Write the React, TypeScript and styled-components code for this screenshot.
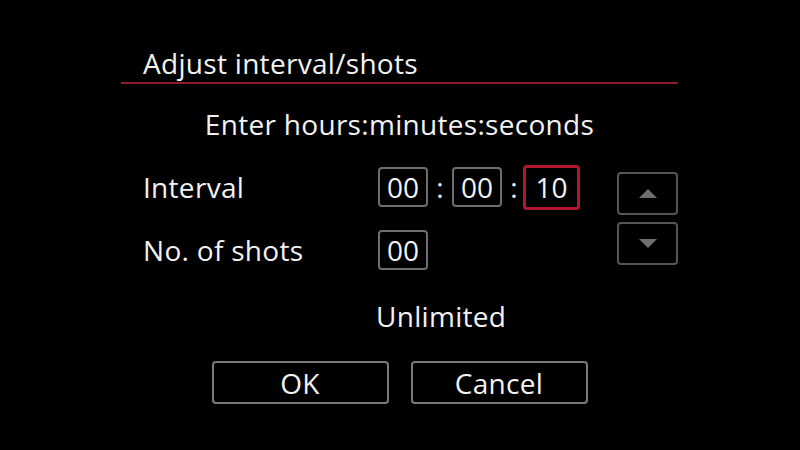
import styled, { createGlobalStyle } from 'styled-components'

const GlobalStyle = createGlobalStyle`
  html, body {
    margin: 0;
    padding: 0;
    background: #000;
  }
  body {
    font-family: 'Open Sans', 'DejaVu Sans', sans-serif;
    color: #f2f2f2;
  }
`

const Screen = styled.div`
  width: 800px;
  height: 450px;
  background: #000;
  overflow: hidden;
  padding-top: 44px;
  box-sizing: border-box;
`

const Dialog = styled.div`
  margin-left: 121px;
  width: 557px;
  display: flex;
  flex-direction: column;
`

const Header = styled.div`
  padding-left: 22px;
  height: 38px;
  border-bottom: 2px solid #8d1c2b;
  display: flex;
  align-items: center;
`

const Title = styled.h1`
  margin: 0;
  font-size: 28px;
  font-weight: 400;
  letter-spacing: 0.3px;
  line-height: 1;
`

const Prompt = styled.div`
  margin-top: 23px;
  text-align: center;
  font-size: 28px;
  letter-spacing: 0.3px;
  line-height: 34px;
`

const Form = styled.div`
  margin-top: 22px;
  display: grid;
  grid-template-columns: 235px 239px 60px;
  grid-template-rows: 48px 17px 43px;
  padding-left: 22px;
`

const Label = styled.div<{ $row: number }>`
  grid-column: 1;
  grid-row: ${({ $row }) => $row};
  display: flex;
  align-items: center;
  font-size: 28px;
  letter-spacing: 0.3px;
`

const Fields = styled.div<{ $row: number }>`
  grid-column: 2;
  grid-row: ${({ $row }) => $row};
  display: flex;
  align-items: center;
`

const Box = styled.div<{ $active?: boolean }>`
  box-sizing: border-box;
  width: ${({ $active }) => ($active ? '57px' : '50px')};
  height: ${({ $active }) => ($active ? '45px' : '40px')};
  margin-left: ${({ $active }) => ($active ? '-3px' : '0')};
  border: ${({ $active }) => ($active ? '3px solid #b3162c' : '2px solid #6e6e6e')};
  border-radius: 4px;
  display: flex;
  align-items: center;
  justify-content: center;
  font-size: 28px;
  line-height: 1;
`

const Colon = styled.span`
  width: 24px;
  text-align: center;
  font-size: 28px;
`

const Arrows = styled.div`
  grid-column: 3;
  grid-row: 1 / span 3;
  display: flex;
  flex-direction: column;
  gap: 7px;
  padding-top: 9px;
`

const ArrowButton = styled.div`
  box-sizing: border-box;
  width: 61px;
  height: 43px;
  border: 2px solid #555;
  border-radius: 4px;
  display: flex;
  align-items: center;
  justify-content: center;
`

const Status = styled.div`
  margin-top: 30px;
  padding-left: 255px;
  font-size: 28px;
  letter-spacing: 0.3px;
  line-height: 30px;
`

const Buttons = styled.div`
  margin-top: 30px;
  display: flex;
  justify-content: center;
  gap: 22px;
`

const Button = styled.div`
  box-sizing: border-box;
  width: 177px;
  height: 43px;
  border: 2px solid #7a7a7a;
  border-radius: 4px;
  display: flex;
  align-items: center;
  justify-content: center;
  font-size: 28px;
  letter-spacing: 0.3px;
`

function Triangle({ down }: { down?: boolean }) {
  return (
    <svg width="18" height="9" viewBox="0 0 18 9">
      <polygon
        points={down ? '0,0 18,0 9,9' : '0,9 18,9 9,0'}
        fill="#6f6f6f"
      />
    </svg>
  )
}

export default function App() {
  return (
    <>
      <GlobalStyle />
      <Screen>
        <Dialog>
          <Header>
            <Title>Adjust interval/shots</Title>
          </Header>
          <Prompt>Enter hours:minutes:seconds</Prompt>
          <Form>
            <Label $row={1}>Interval</Label>
            <Fields $row={1}>
              <Box>00</Box>
              <Colon>:</Colon>
              <Box>00</Box>
              <Colon>:</Colon>
              <Box $active>10</Box>
            </Fields>
            <Label $row={3}>No. of shots</Label>
            <Fields $row={3}>
              <Box>00</Box>
            </Fields>
            <Arrows>
              <ArrowButton>
                <Triangle />
              </ArrowButton>
              <ArrowButton>
                <Triangle down />
              </ArrowButton>
            </Arrows>
          </Form>
          <Status>Unlimited</Status>
          <Buttons>
            <Button>OK</Button>
            <Button>Cancel</Button>
          </Buttons>
        </Dialog>
      </Screen>
    </>
  )
}
